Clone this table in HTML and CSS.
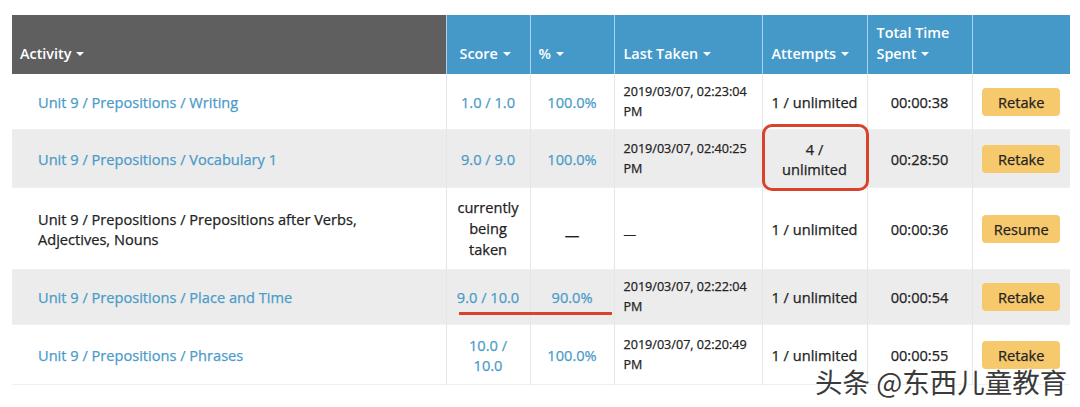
FILE: index.html
```html
<!DOCTYPE html>
<html lang="en">
<head>
<meta charset="utf-8">
<title>Activities</title>
<link rel="stylesheet" href="styles.css">
</head>
<body>
<div class="page">
  <table class="grid">
    <colgroup>
      <col class="c-act"><col class="c-score"><col class="c-pct"><col class="c-last"><col class="c-att"><col class="c-time"><col class="c-btn">
    </colgroup>
    <thead>
      <tr>
        <th class="h-act">Activity <span class="caret"></span></th>
        <th class="h-score">Score <span class="caret"></span></th>
        <th class="h-pct">% <span class="caret"></span></th>
        <th>Last Taken <span class="caret"></span></th>
        <th>Attempts <span class="caret"></span></th>
        <th>Total Time<br>Spent <span class="caret"></span></th>
        <th></th>
      </tr>
    </thead>
    <tbody>
      <tr class="r1">
        <td class="act link">Unit 9 / Prepositions / Writing</td>
        <td class="mid link">1.0 / 1.0</td>
        <td class="mid link">100.0%</td>
        <td class="last">2019/03/07, 02:23:04<br>PM</td>
        <td class="mid">1 / unlimited</td>
        <td class="mid">00:00:38</td>
        <td class="mid"><span class="btn">Retake</span></td>
      </tr>
      <tr class="r2 alt">
        <td class="act link">Unit 9 / Prepositions / Vocabulary 1</td>
        <td class="mid link">9.0 / 9.0</td>
        <td class="mid link">100.0%</td>
        <td class="last">2019/03/07, 02:40:25<br>PM</td>
        <td class="mid att-mark">4 /<br>unlimited<span class="ring"></span></td>
        <td class="mid">00:28:50</td>
        <td class="mid"><span class="btn">Retake</span></td>
      </tr>
      <tr class="r3">
        <td class="act">Unit 9 / Prepositions / Prepositions after Verbs,<br>Adjectives, Nouns</td>
        <td class="mid tall">currently<br>being<br>taken</td>
        <td class="mid dash">—</td>
        <td class="last dash">—</td>
        <td class="mid">1 / unlimited</td>
        <td class="mid">00:00:36</td>
        <td class="mid"><span class="btn">Resume</span></td>
      </tr>
      <tr class="r4 alt">
        <td class="act link">Unit 9 / Prepositions / Place and Time</td>
        <td class="mid link score-mark">9.0 / 10.0<span class="underline"></span></td>
        <td class="mid link">90.0%</td>
        <td class="last">2019/03/07, 02:22:04<br>PM</td>
        <td class="mid">1 / unlimited</td>
        <td class="mid">00:00:54</td>
        <td class="mid"><span class="btn">Retake</span></td>
      </tr>
      <tr class="r5">
        <td class="act link">Unit 9 / Prepositions / Phrases</td>
        <td class="mid link">10.0 /<br>10.0</td>
        <td class="mid link">100.0%</td>
        <td class="last">2019/03/07, 02:20:49<br>PM</td>
        <td class="mid">1 / unlimited</td>
        <td class="mid">00:00:55</td>
        <td class="mid"><span class="btn">Retake</span></td>
      </tr>
    </tbody>
  </table>
  <div class="watermark">头条 @东西儿童教育</div>
</div>
</body>
</html>
```
FILE: styles.css
```css
html, body {
  margin: 0;
  padding: 0;
  background: #ffffff;
}
.page {
  position: relative;
  width: 1080px;
  height: 407px;
  padding: 15px 0 0 12px;
  box-sizing: border-box;
  font-family: "Open Sans", "Liberation Sans", sans-serif;
  color: #222;
  overflow: hidden;
}
.grid {
  border-collapse: collapse;
  table-layout: fixed;
  width: 1058px;
  font-size: 14.6px;
  font-weight: 500;
}
.c-act { width: 434px; }
.c-score { width: 84px; }
.c-pct { width: 84px; }
.c-last { width: 148px; }
.c-att { width: 105px; }
.c-time { width: 105px; }
.c-btn { width: 98px; }

th {
  height: 59px;
  box-sizing: border-box;
  background: #4599c9;
  color: #fff;
  font-weight: 600;
  font-size: 14.4px;
  text-align: left;
  vertical-align: bottom;
  padding: 0 0 10px 9px;
  line-height: 21px;
  border-left: 1px solid #a8d3ee;
}
th:first-child { border-left: none; }
th.h-act { background: #5f5f5f; padding-left: 8px; }
th.h-score { padding-left: 13px; border-left: 1px solid #b4cfe0; }
th.h-pct { padding-left: 8px; }
.caret {
  display: inline-block;
  width: 0;
  height: 0;
  border-left: 4px solid transparent;
  border-right: 4px solid transparent;
  border-top: 4px solid #fff;
  vertical-align: middle;
  margin-left: 1px;
  position: relative;
  top: -1px;
}

td {
  padding: 0;
  line-height: 20px;
  vertical-align: middle;
  border-left: 1px solid #e6e6e6;
  -webkit-text-stroke: 0.25px currentColor;
}
td:first-child { border-left: none; }
tbody tr { border-bottom: 1px solid #f0f0f0; }
.r1 td { height: 55px; }
.r2 td { height: 57px; }
.r3 td { height: 81px; }
.r4 td { height: 54px; }
.r5 td { height: 59px; }
tr.alt td { background: #ececec; }

.act { padding-left: 26px; }
.mid { text-align: center; }
.last { padding-left: 9px; font-size: 12.6px; }
.link { color: #4a9bc9; }
.tall { line-height: 21px; }
.r3 td.dash { height: 69px; padding-top: 12px; }

.btn {
  display: inline-block;
  width: 78px;
  height: 28px;
  line-height: 28px;
  background: #f6c96c;
  border-radius: 4px;
  font-size: 14.6px;
  text-align: center;
  color: #222;
  vertical-align: middle;
}

.att-mark, .score-mark { position: relative; }
.ring {
  position: absolute;
  left: -1px;
  top: -6px;
  width: 107px;
  height: 67px;
  box-sizing: border-box;
  border: 3px solid #d9432c;
  border-radius: 10px;
}
.underline {
  position: absolute;
  left: 12px;
  top: 42px;
  width: 153px;
  height: 3px;
  background: #dc412a;
}

.watermark {
  position: absolute;
  left: 815px;
  top: 363px;
  font-family: "Noto Sans CJK SC", sans-serif;
  font-size: 27.5px;
  line-height: 36px;
  color: #3a3a3a;
  text-shadow: 1px 1px 0 #fff, -1px -1px 0 #fff;
}
```
